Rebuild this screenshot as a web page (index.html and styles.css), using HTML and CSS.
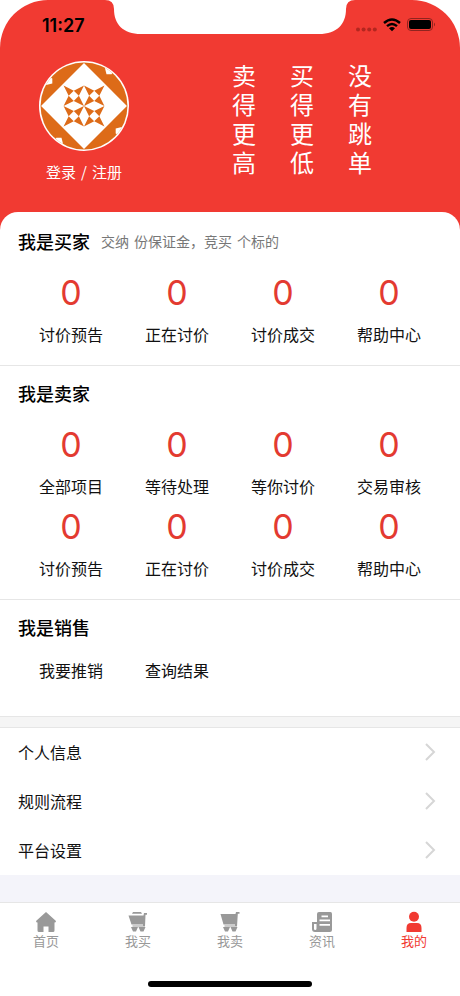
FILE: index.html
```html
<!DOCTYPE html>
<html lang="zh-CN">
<head>
<meta charset="utf-8">
<meta name="viewport" content="width=device-width, initial-scale=1">
<title>我的</title>
<link rel="stylesheet" href="styles.css">
</head>
<body>
<div class="app">
  <header class="hero">
    <div class="status">
      <time class="clock">11:27</time>
      <svg class="notch" viewBox="0 0 250 34" aria-hidden="true"><path d="M0 0H250Q241 0 241 9C241 24 232 34 214 34H36C18 34 9 24 9 9Q9 0 0 0Z" fill="#fff"/></svg>
      <div class="signals">
        <svg width="21" height="5" viewBox="0 0 21 5" aria-hidden="true"><g fill="#b3261f"><circle cx="2" cy="2.500" r="2"/><circle cx="7.600" cy="2.500" r="2"/><circle cx="13.200" cy="2.500" r="2"/><circle cx="18.800" cy="2.500" r="2"/></g></svg>
        <svg class="wifi" width="18" height="14" viewBox="0 0 18 14" aria-hidden="true"><g fill="none" stroke="#000" stroke-width="2.400"><path d="M1 5Q9-2.200 17 5"/><path d="M4 8.200Q9 3.800 14 8.200"/></g><path d="M9 13.300L6 10.300Q9 7.800 12 10.300Z"/></svg>
        <svg class="battery" width="29" height="14" viewBox="0 0 29 14" aria-hidden="true"><rect x=".5" y=".5" width="25" height="12" rx="3.500" fill="none" stroke="#8f241f"/><rect x="2" y="2" width="22" height="9" rx="2"/><path d="M27 4.500Q29 6.500 27 8.500Z" fill="#8f241f"/></svg>
      </div>
    </div>
    <div class="banner">
      <a class="account" href="#login">
        <svg class="avatar" viewBox="0 0 88 88" aria-hidden="true">
          <defs>
            <clipPath id="disc"><circle cx="44" cy="44" r="42.500"/></clipPath>
            <path id="star" d="M0 0L10 5L5 10ZM20 0L15 10L10 5ZM20 20L10 15L15 10ZM0 20L5 10L10 15Z"/>
            <path id="nick" d="M4 12L5 24L13 22V17Z"/>
          </defs>
          <circle cx="44" cy="44" r="44" fill="#fff"/>
          <g clip-path="url(#disc)">
            <rect width="88" height="88" fill="#dd6b18"/>
            <g fill="#fff"><path d="M44 2L86 44L44 86L2 44Z"/><use href="#nick"/><use href="#nick" transform="rotate(90 44 44)"/><use href="#nick" transform="rotate(180 44 44)"/><use href="#nick" transform="rotate(270 44 44)"/></g>
          </g>
          <g fill="#dd6b18"><use href="#star" x="24" y="24"/><use href="#star" x="44" y="24"/><use href="#star" x="24" y="44"/><use href="#star" x="44" y="44"/></g>
        </svg>
        <span class="login"><span>登录</span><span>/</span><span>注册</span></span>
      </a>
      <div class="slogans"><p>卖得更高</p><p>买得更低</p><p>没有跳单</p></div>
    </div>
  </header>

  <main>
    <section class="group buyer">
      <div class="heading"><h2>我是买家</h2><p><span>交纳</span><span>份保证金，竞买</span><span>个标的</span></p></div>
      <div class="grid">
        <a href="#a1"><b>0</b><span>讨价预告</span></a>
        <a href="#a2"><b>0</b><span>正在讨价</span></a>
        <a href="#a3"><b>0</b><span>讨价成交</span></a>
        <a href="#a4"><b>0</b><span>帮助中心</span></a>
      </div>
    </section>
    <section class="group">
      <div class="heading"><h2>我是卖家</h2></div>
      <div class="grid">
        <a href="#b1"><b>0</b><span>全部项目</span></a>
        <a href="#b2"><b>0</b><span>等待处理</span></a>
        <a href="#b3"><b>0</b><span>等你讨价</span></a>
        <a href="#b4"><b>0</b><span>交易审核</span></a>
        <a href="#b5"><b>0</b><span>讨价预告</span></a>
        <a href="#b6"><b>0</b><span>正在讨价</span></a>
        <a href="#b7"><b>0</b><span>讨价成交</span></a>
        <a href="#b8"><b>0</b><span>帮助中心</span></a>
      </div>
    </section>
    <section class="group sales">
      <div class="heading"><h2>我是销售</h2></div>
      <div class="grid">
        <a href="#c1"><span>我要推销</span></a>
        <a href="#c2"><span>查询结果</span></a>
      </div>
    </section>
    <nav class="menu" aria-label="设置">
      <a href="#m1">个人信息<svg width="12" height="18" viewBox="0 0 12 18" aria-hidden="true"><path d="M2 1L10 9L2 17"/></svg></a>
      <a href="#m2">规则流程<svg width="12" height="18" viewBox="0 0 12 18" aria-hidden="true"><path d="M2 1L10 9L2 17"/></svg></a>
      <a href="#m3">平台设置<svg width="12" height="18" viewBox="0 0 12 18" aria-hidden="true"><path d="M2 1L10 9L2 17"/></svg></a>
    </nav>
  </main>

  <footer class="bottom">
    <nav class="tabs" aria-label="导航">
      <a href="#home"><svg viewBox="0 0 22 22" aria-hidden="true"><path d="M11 1L21 10Q21 11.500 19.500 11.500V19.500Q19.500 21 18 21H13.500V15.500H8.500V21H4Q2.500 21 2.500 19.500V11.500Q1 11.500 1 10Z"/></svg>首页</a>
      <a href="#buy"><svg viewBox="0 0 22 22" aria-hidden="true"><path d="M6 1H14L15 2.800H5ZM1.500 4.500H16.500L17 2H20V3.800H18.500L18 15.500H5.500V14.500H16V13.500H4.500Z"/><path d="M4 16H11L9 20.500H6ZM11.500 16H18.500L16.500 20.500H13.500Z"/></svg>我买</a>
      <a href="#sell"><svg viewBox="0 0 22 22" aria-hidden="true"><path d="M1.500 3H16.500L17 1H20.500V2.800H18.800L18 15.500H5.500V14.500H16V13.500H4.500Z"/><path d="M4 16H11L9 20.500H6ZM11.500 16H18.500L16.500 20.500H13.500Z"/></svg>我卖</a>
      <a href="#news"><svg viewBox="0 0 22 22" aria-hidden="true"><path fill-rule="evenodd" d="M8 1H19.500Q21 1 21 3V19Q21 21 19 21H4Q1 21 1 18V11H6V3Q6 1 8 1ZM3 13V18Q3 19 4.200 19Q5.500 19 5.500 17.500V13ZM10.500 4.500V6.300H17V4.500ZM8.500 8.500V10.300H19V8.500ZM8.500 13V14.800H19V13Z"/></svg>资讯</a>
      <a class="active" href="#me" aria-current="page"><svg viewBox="0 0 22 22" aria-hidden="true"><circle cx="11" cy="5.800" r="5"/><path d="M3.500 21V17Q3.500 12 8 12H14Q18.500 12 18.500 17V21Z"/></svg>我的</a>
    </nav>
    <div class="home-bar"></div>
  </footer>
</div>
</body>
</html>
```
FILE: styles.css
```css
* { box-sizing: border-box; }
body {
  margin: 0;
  background: #fff;
  color: #111;
  font-family: "Noto Sans CJK SC", sans-serif;
  font-size: 16px;
  line-height: 24px;
}
h2, p { margin: 0; }
a { color: inherit; text-decoration: none; }
svg { display: block; flex: none; }
.app { display: flex; flex-direction: column; min-height: 100vh; }

.hero {
  background: #f13a32;
  border-radius: 48px 48px 0 0;
  color: #fff;
  padding-bottom: 48px;
}
.status {
  display: grid;
  grid-template-columns: 1fr 250px 1fr;
  height: 60px;
  color: #000;
}
.clock {
  padding: 14px 0 0 42px;
  font-family: Inter, sans-serif;
  font-size: 18px;
  font-weight: 600;
}
.notch { width: 250px; height: 34px; }
.signals {
  display: flex;
  align-items: flex-end;
  justify-content: flex-end;
  gap: 6px;
  height: 32px;
  padding-right: 24px;
}
.banner { display: flex; justify-content: space-between; padding: 0 88px 0 39px; }
.account { display: flex; flex-direction: column; align-items: center; font-size: 15px; }
.login { display: flex; gap: 5px; }
.avatar { width: 90px; height: 90px; margin: 1px 0 9px; }
.slogans { display: flex; gap: 34px; }
.slogans p { width: 24px; font-size: 24px; line-height: 29px; word-break: break-all; }

.group { padding: 15px 18px 19px; background: #fff; border-bottom: 1px solid #e6e6e6; }
.buyer { position: relative; margin-top: -20px; padding-top: 17px; border-radius: 18px 18px 0 0; }
.heading { display: flex; align-items: center; gap: 11px; height: 24px; }
h2 { font-size: 18px; font-weight: 500; line-height: 24px; color: #000; }
.heading p { display: flex; gap: 5px; font-size: 14px; color: #777; }
.grid { display: grid; grid-template-columns: repeat(4, 1fr); row-gap: 4px; padding-top: 15px; }
.grid a { display: flex; flex-direction: column; align-items: center; }
.grid b {
  margin: 4px 0 8px;
  font-family: Inter, sans-serif;
  font-size: 34px;
  font-weight: 400;
  line-height: 42px;
  color: #e33a31;
}
.sales { padding-bottom: 34px; }
.sales .grid { padding-top: 19px; }

.menu { border-top: 10px solid #f5f5f5; }
.menu a {
  display: flex;
  align-items: center;
  justify-content: space-between;
  height: 49px;
  padding: 0 24px 0 18px;
}
.menu a:first-child { border-top: 1px solid #e6e6e6; }
.menu path { fill: none; stroke: #d6d6d6; stroke-width: 2; }

.bottom { margin-top: auto; border-top: 27px solid #f4f4fa; }
.tabs { display: grid; grid-template-columns: repeat(5, 1fr); padding-top: 8px; border-top: 1px solid #e6e6e6; }
.tabs a {
  display: flex;
  flex-direction: column;
  align-items: center;
  color: #999;
  font-size: 13px;
  line-height: 16px;
}
.tabs svg { width: 22px; height: 22px; fill: currentColor; }
.tabs .active { color: #f13a32; }
.home-bar { width: 164px; height: 6px; margin: 32px auto 9px; border-radius: 3px; background: #000; }
```
